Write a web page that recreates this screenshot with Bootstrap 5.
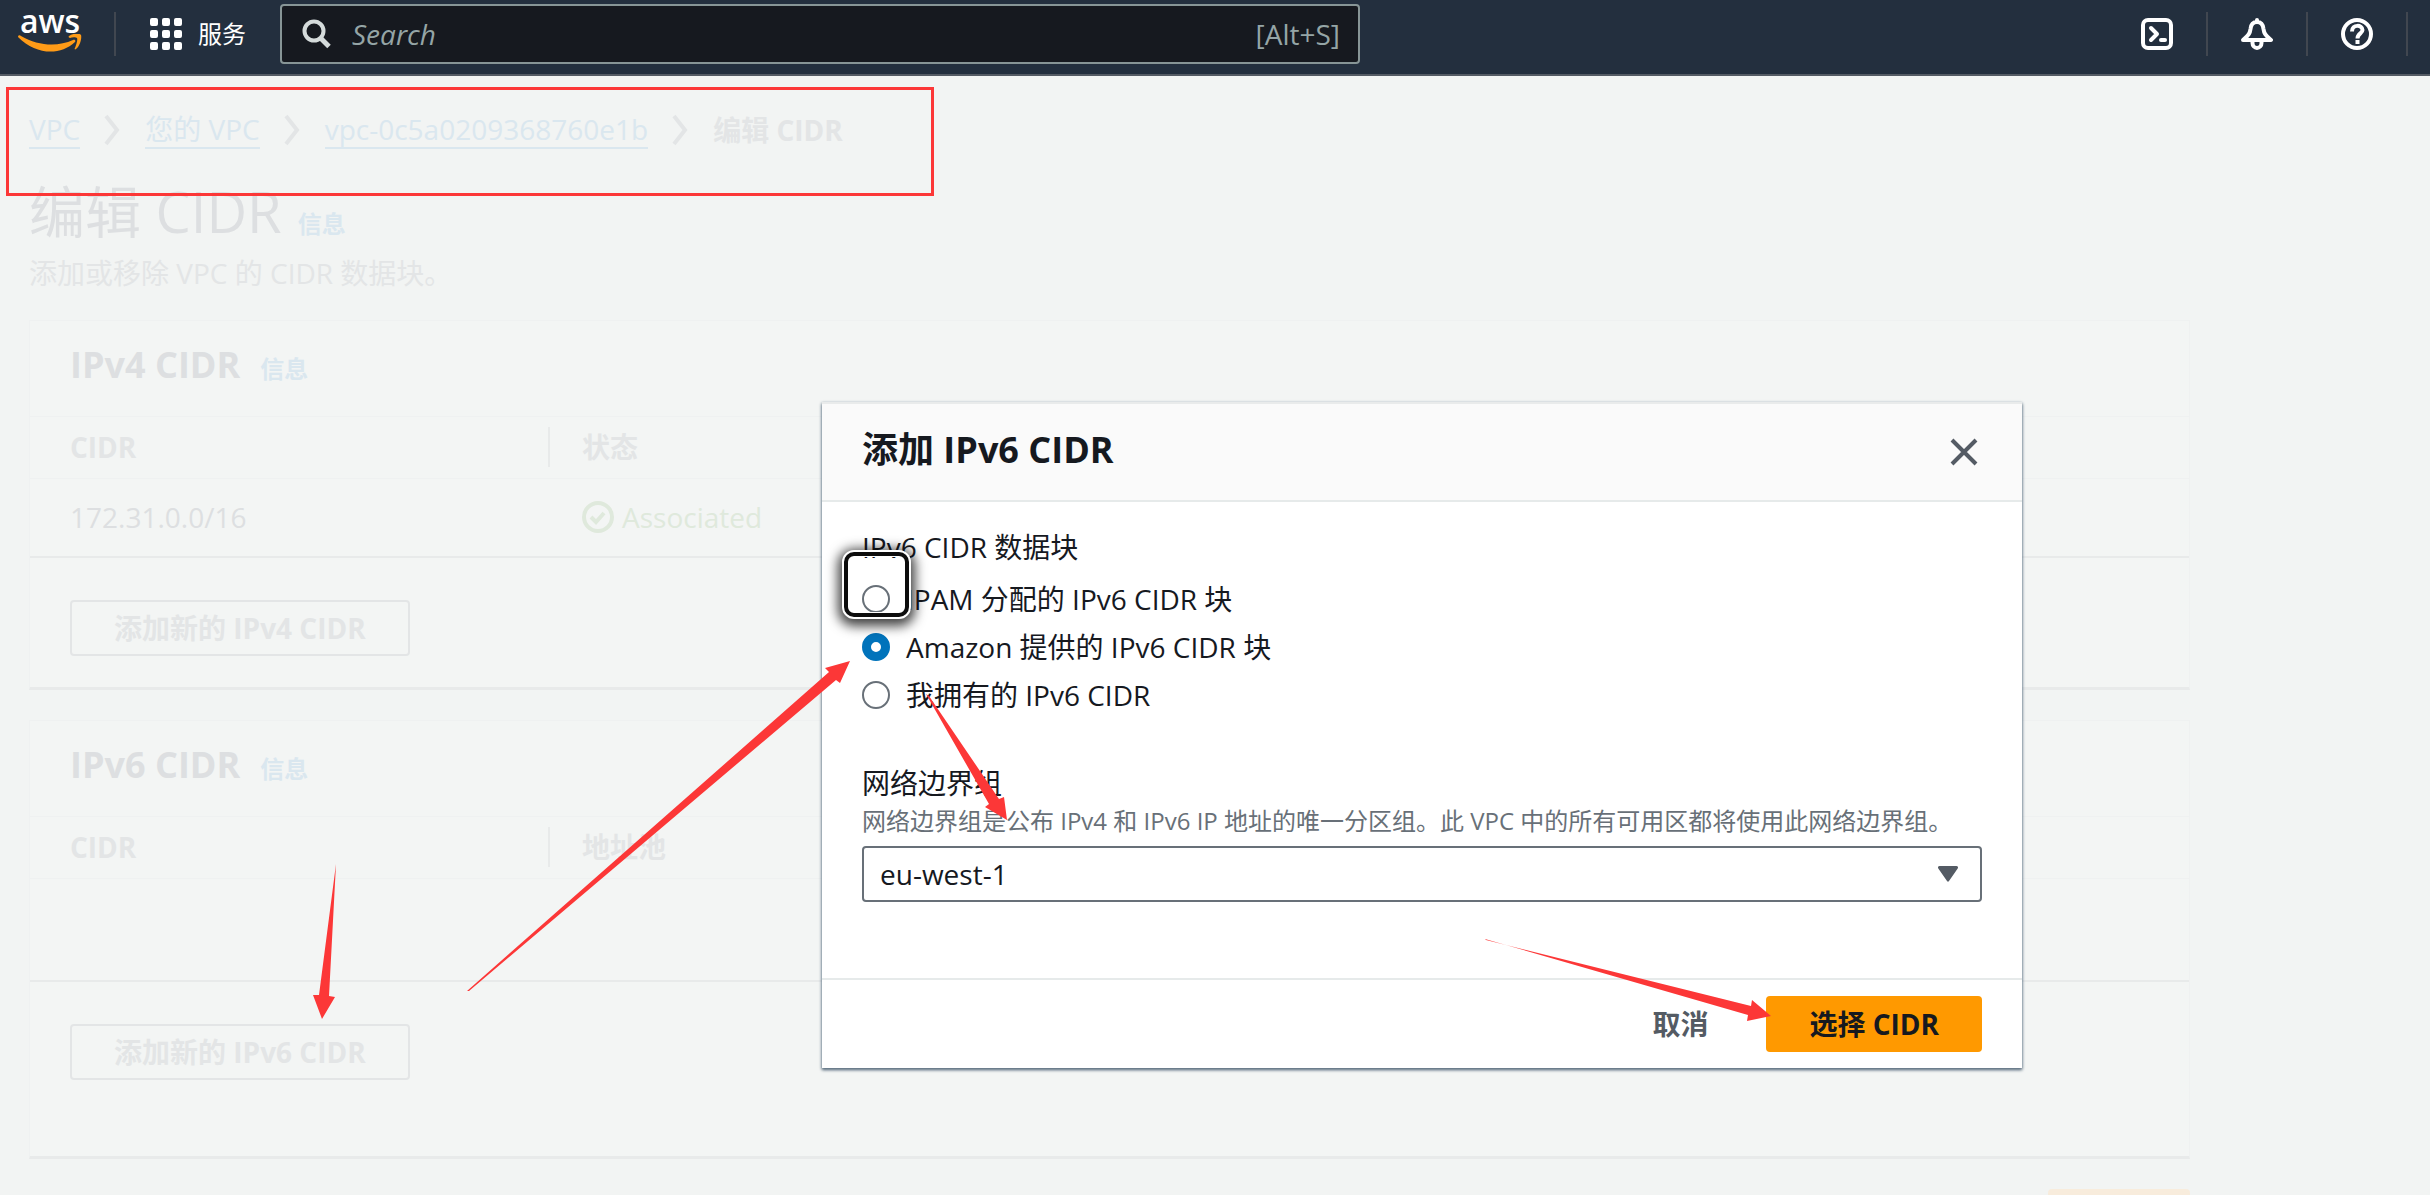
<!DOCTYPE html>
<html lang="zh-CN">
<head>
<meta charset="utf-8">
<meta name="viewport" content="width=device-width, initial-scale=1">
<title>编辑 CIDR</title>
<link href="https://cdn.jsdelivr.net/npm/bootstrap@5.3.0/dist/css/bootstrap.min.css" rel="stylesheet">
<style>
:root{--ink:#16191f;--fade:#e3e5e6;--fade-strong:#dddfe1;--fade-link:#dae7ef;--line:#e8eaea;--hair:#eff1f1;--panel:#f3f5f4;--mark-red:#fc3737}
body{font-family:"Open Sans","Noto Sans CJK SC",sans-serif;font-size:28px;line-height:40px;color:var(--ink);background:#f2f4f3;position:relative;height:100vh;overflow:hidden}
/* top bar */
.topbar{background:#232f3e;border-bottom:2px solid #545b64;height:76px;padding:4px 22px 0 18px;flex-wrap:nowrap;align-items:flex-start}
.brand{width:64px;color:#fff;text-decoration:none;font-weight:600;font-size:32px;line-height:34px;text-align:center;height:60px}
.brand svg{display:block;margin-top:-4px}
.rule{width:2px;height:44px;background:#414750;margin-top:8px;flex:none}
.rule-first{margin-left:32px}
.services{color:#fff;font-size:24px;line-height:36px;border:0;background:none;padding:0;height:36px;margin:12px 34px 0;gap:16px;flex:none}
.searchbox{height:60px;flex:1 1 0;max-width:1080px;border:2px solid #879596;border-radius:4px;background:#16191f;padding:0 18px 0 20px;color:#95a5a6}
.searchbox input{background:none;border:0;outline:0;color:#95a5a6;font-style:italic;padding:0;min-width:0}
.searchbox input::placeholder{color:#95a5a6;opacity:1}
.tool{border:0;background:none;padding:0;width:32px;height:32px;margin:14px 33px 0;flex:none;color:#fff;line-height:0}
/* dimmed page */
.page{padding:34px 240px 0 29px}
.crumbs{height:40px;gap:25px;list-style:none;padding:0;margin:0;color:var(--fade)}
.crumbs li{display:flex;gap:24px;align-items:center}
.crumbs a{color:var(--fade-link);text-decoration:none;border-bottom:2px solid var(--fade-link);line-height:36px}
.title{font-size:56px;line-height:72px;font-weight:400;color:var(--fade-strong);margin:25px 0 0}
.info{font-size:24px;line-height:36px;font-weight:600;color:var(--fade-link);text-decoration:none}
.intro{color:var(--fade);margin:6px 0 27px}
.panel{background:var(--panel);border:1px solid var(--hair);border-bottom:3px solid var(--line);margin-bottom:30px}
.panel-top{padding:22px 40px;gap:20px;height:96px;border-bottom:1px solid var(--hair)}
.panel-top h2{font-size:36px;line-height:44px;font-weight:700;color:var(--fade-strong);margin:0}
.grid-table{width:100%;table-layout:fixed;margin:0;color:var(--fade-strong)}
.grid-table th{height:61px;padding:0 40px;color:var(--fade);font-weight:700;border-bottom:1px solid var(--hair)}
.grid-table .c1{width:518px}
.grid-table th:last-child,.grid-table td:last-child{padding-left:0}
.sep{border-left:2px solid var(--line);padding:0 0 0 32px;display:block}
.grid-table td{height:79px;padding:0 40px;border-bottom:2px solid var(--line)}
.grid-table .blank td{height:103px}
.state{color:#dfe9dc;padding-left:34px;gap:8px}
.panel-end{padding:42px 40px 31px}
.panel-end.tall{padding-bottom:76px}
.add{border:2px solid var(--fade);border-radius:4px;background:none;color:var(--fade);font-weight:700;padding:6px 42px;height:56px}
.save{border:0;border-radius:4px;background:#f8ecdc;width:142px;height:56px}
/* dialog */
.stage{position:absolute;left:414px;right:0;top:402px;display:flex;justify-content:center}
.dialog{width:1200px;background:#fff;border-top:2px solid #e9ebeb;box-shadow:0 2px 3px #5e7080,0 1px 3px #8fa1aa}
.dialog-top{background:#fafafa;border-bottom:2px solid #e6eaea;height:98px;padding:0 40px}
.dialog-top h1{font-size:36px;line-height:44px;font-weight:700;margin:0;padding-bottom:4px}
.shut{border:0;background:none;padding:0;line-height:0;margin-right:2px}
.dialog-main{padding:25px 40px 76px}
.dialog-main legend{font-size:28px;line-height:40px;margin-bottom:12px}
.choice{height:40px;margin-bottom:8px;gap:16px}
.choice input{appearance:none;width:28px;height:28px;border:2px solid #687078;border-radius:50%;margin:0;background:#fff}
.choice input:checked{border:9px solid #0073bb}
.help{font-size:24px;line-height:36px;color:#687078;margin:0 0 7px}
.picker{position:relative}
.picker select{appearance:none;width:100%;height:56px;border:2px solid #687078;border-radius:4px;background:#fff;color:var(--ink);padding:0 60px 0 16px}
.picker svg{position:absolute;right:24px;top:20px;pointer-events:none}
.dialog-end{border-top:2px solid #e6eaea;padding:16px 40px;gap:18px}
.plain{border:0;background:none;color:#545b64;font-weight:700;padding:8px 40px}
.go{border:0;border-radius:4px;background:#ff9900;color:var(--ink);font-weight:700;padding:8px 43px;height:56px}
/* annotations over the page */
.focusbox{position:absolute;left:843px;top:551px;width:67px;height:67px;border:5px solid #0d0d0d;border-radius:11px;outline:2px solid #fff;outline-offset:-1px;box-shadow:inset 0 0 0 1px #fff,0 3px 12px 5px rgba(0,0,0,.75);pointer-events:none}
.frame{position:absolute;left:6px;top:87px;width:928px;height:109px;border:3px solid var(--mark-red);pointer-events:none}
.arrows{position:absolute;left:0;top:0;pointer-events:none}
</style>
<script src="https://cdn.jsdelivr.net/npm/bootstrap@5.3.0/dist/js/bootstrap.bundle.min.js"></script>
</head>
<body>
<header class="topbar d-flex">
  <a class="brand" href="#" aria-label="aws">aws
    <svg width="64" height="20" viewBox="0 0 64 20" fill="#ff9b17"><path d="M0 3C0 1 2 1 3 2C20 12 40 13 55 6C57 5 58 7 57 8C42 22 18 21 0 3Z"/><path d="M51 2C55-1 62-1 63 1C64 4 62 12 58 15C57 16 56 15 57 14C58 11 60 6 59 4C58 3 54 3 52 4C51 4 50 3 51 2Z"/></svg>
  </a>
  <span class="rule rule-first"></span>
  <button class="services d-flex align-items-center" type="button">
    <svg width="32" height="32" fill="#fff"><path d="M2 0h4a2 2 0 0 1 2 2v4a2 2 0 0 1-2 2H2a2 2 0 0 1-2-2V2a2 2 0 0 1 2-2zM14 0h4a2 2 0 0 1 2 2v4a2 2 0 0 1-2 2h-4a2 2 0 0 1-2-2V2a2 2 0 0 1 2-2zM26 0h4a2 2 0 0 1 2 2v4a2 2 0 0 1-2 2h-4a2 2 0 0 1-2-2V2a2 2 0 0 1 2-2zM2 12h4a2 2 0 0 1 2 2v4a2 2 0 0 1-2 2H2a2 2 0 0 1-2-2v-4a2 2 0 0 1 2-2zM14 12h4a2 2 0 0 1 2 2v4a2 2 0 0 1-2 2h-4a2 2 0 0 1-2-2v-4a2 2 0 0 1 2-2zM26 12h4a2 2 0 0 1 2 2v4a2 2 0 0 1-2 2h-4a2 2 0 0 1-2-2v-4a2 2 0 0 1 2-2zM2 24h4a2 2 0 0 1 2 2v4a2 2 0 0 1-2 2H2a2 2 0 0 1-2-2v-4a2 2 0 0 1 2-2zM14 24h4a2 2 0 0 1 2 2v4a2 2 0 0 1-2 2h-4a2 2 0 0 1-2-2v-4a2 2 0 0 1 2-2zM26 24h4a2 2 0 0 1 2 2v4a2 2 0 0 1-2 2h-4a2 2 0 0 1-2-2v-4a2 2 0 0 1 2-2z"/></svg>
    <span>服务</span>
  </button>
  <div class="searchbox d-flex align-items-center">
    <svg class="flex-shrink-0 me-3" width="30" height="30" fill="none" stroke="#d5dbdb" stroke-width="4"><circle cx="12" cy="12" r="9.5"/><path d="M18.500 19L27 27.500" stroke-width="5"/></svg>
    <input class="flex-grow-1 ms-1" type="search" placeholder="Search" aria-label="Search">
    <span>[Alt+S]</span>
  </div>
  <div class="d-flex ms-auto">
    <button class="tool" type="button" aria-label="CloudShell"><svg width="32" height="32" fill="none" stroke="#fff" stroke-width="4" stroke-linecap="round" stroke-linejoin="round"><rect x="2" y="2" width="28" height="28" rx="5"/><path d="M10 10l6 6-6 6"/><path d="M20 22h4"/></svg></button>
    <span class="rule"></span>
    <button class="tool" type="button" aria-label="通知"><svg width="32" height="32" fill="none" stroke="#fff" stroke-width="4" stroke-linejoin="round" stroke-linecap="round"><path d="M16 2v1M2 22C8 17 9 15 9.500 11C10 6 12.500 4 16 4S22 6 22.500 11C23 15 24 17 30 22Z"/><path d="M11.500 23v2a4.500 5 0 0 0 9 0v-2"/></svg></button>
    <span class="rule"></span>
    <button class="tool" type="button" aria-label="帮助"><svg width="32" height="32" fill="none" stroke="#fff" stroke-width="4"><circle cx="16" cy="16" r="14"/><path d="M11 13.500C11 6 21.500 6.500 21.500 12C21.500 15.500 16.500 15.500 16.500 20.500"/><path d="M16.500 22v4"/></svg></button>
    <span class="rule"></span>
  </div>
</header>

<main class="page">
  <nav aria-label="breadcrumb">
    <ol class="crumbs d-flex align-items-center">
      <li><a href="#">VPC</a><svg width="16" height="32" fill="none" stroke="#e3e5e6" stroke-width="4"><path d="M2 2l11 14L2 30"/></svg></li>
      <li><a href="#">您的 VPC</a><svg width="16" height="32" fill="none" stroke="#e3e5e6" stroke-width="4"><path d="M2 2l11 14L2 30"/></svg></li>
      <li><a href="#">vpc-0c5a0209368760e1b</a><svg width="16" height="32" fill="none" stroke="#e3e5e6" stroke-width="4"><path d="M2 2l11 14L2 30"/></svg></li>
      <li class="fw-bold">编辑 CIDR</li>
    </ol>
  </nav>
  <div class="d-flex align-items-baseline gap-3">
    <h1 class="title">编辑 CIDR</h1><a class="info fw-bold" href="#">信息</a>
  </div>
  <p class="intro">添加或移除 VPC 的 CIDR 数据块。</p>

  <section class="panel">
    <div class="panel-top d-flex align-items-baseline"><h2>IPv4 CIDR</h2><a class="info" href="#">信息</a></div>
    <table class="grid-table">
      <thead><tr><th class="c1">CIDR</th><th><span class="sep">状态</span></th></tr></thead>
      <tbody><tr><td>172.31.0.0/16</td><td><span class="state d-flex align-items-center"><svg width="32" height="32" fill="none" stroke="#dfe9dc" stroke-width="4"><circle cx="16" cy="16" r="14"/><path d="M9 16l5 5 8-9"/></svg>Associated</span></td></tr></tbody>
    </table>
    <div class="panel-end"><button class="add" type="button">添加新的 IPv4 CIDR</button></div>
  </section>

  <section class="panel">
    <div class="panel-top d-flex align-items-baseline"><h2>IPv6 CIDR</h2><a class="info" href="#">信息</a></div>
    <table class="grid-table">
      <thead><tr><th class="c1">CIDR</th><th><span class="sep">地址池</span></th></tr></thead>
      <tbody><tr class="blank"><td></td><td></td></tr></tbody>
    </table>
    <div class="panel-end tall"><button class="add" type="button">添加新的 IPv6 CIDR</button></div>
  </section>
  <div class="d-flex justify-content-end"><button class="save" type="button" aria-label="关闭"></button></div>
</main>

<div class="stage">
  <form class="dialog" role="dialog" aria-labelledby="dlg">
    <div class="dialog-top d-flex align-items-center justify-content-between">
      <h1 id="dlg">添加 IPv6 CIDR</h1>
      <button class="shut" type="button" aria-label="关闭"><svg width="32" height="32" stroke="#545b64" stroke-width="4"><path d="M4 4l24 24M28 4L4 28"/></svg></button>
    </div>
    <div class="dialog-main">
      <fieldset class="mb-5">
        <legend>IPv6 CIDR 数据块</legend>
        <div class="choice d-flex align-items-center"><input type="radio" name="src" id="r1"><label for="r1">IPAM 分配的 IPv6 CIDR 块</label></div>
        <div class="choice d-flex align-items-center"><input type="radio" name="src" id="r2" checked><label for="r2">Amazon 提供的 IPv6 CIDR 块</label></div>
        <div class="choice d-flex align-items-center mb-0"><input type="radio" name="src" id="r3"><label for="r3">我拥有的 IPv6 CIDR</label></div>
      </fieldset>
      <label class="d-block" for="nbg">网络边界组</label>
      <p class="help">网络边界组是公布 IPv4 和 IPv6 IP 地址的唯一分区组。此 VPC 中的所有可用区都将使用此网络边界组。</p>
      <div class="picker"><select id="nbg"><option>eu-west-1</option></select>
        <svg width="20" height="16" fill="#545b64"><path d="M1.500 0h17a1.500 1.500 0 0 1 1.200 2.400L11 15a1.200 1.200 0 0 1-2 0L.300 2.400A1.500 1.500 0 0 1 1.500 0z"/></svg></div>
    </div>
    <div class="dialog-end d-flex justify-content-end">
      <button class="plain" type="button">取消</button>
      <button class="go" type="button">选择 CIDR</button>
    </div>
  </form>
</div>

<div class="focusbox"></div>
<div class="frame"></div>
<svg class="arrows" width="2000" height="1100" fill="#fc3737">
  <path d="M336 864L319 995L313 995L322 1019L335 997L329 996Z"/>
  <path d="M467 991L829 672L825 668L850 661L840 683L836 680L469 991Z"/>
  <path d="M926 694L989 804L985 807L1007 820L1004 797L999 799L929 696Z"/>
  <path d="M1485 939L1748 1015L1747 1021L1771 1016L1752 1000L1751 1006L1486 940Z"/>
</svg>
</body>
</html>
